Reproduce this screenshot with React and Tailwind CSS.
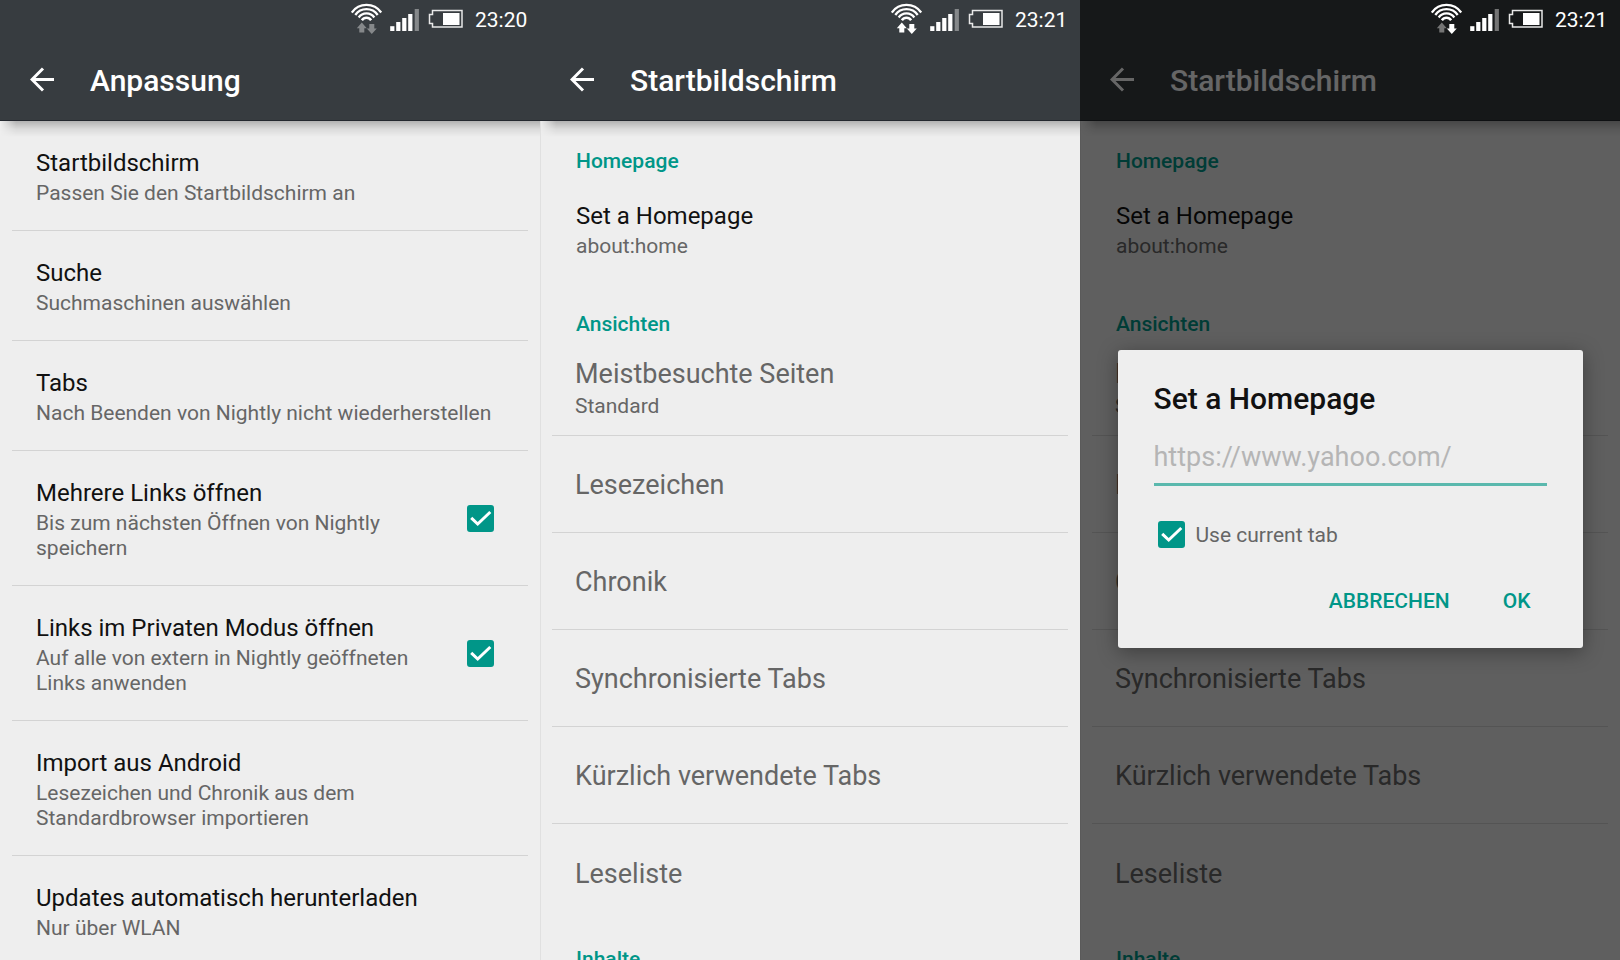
import React from 'react';

function WifiIcon({ up, down }) {
  return (
    <svg width="32" height="32" viewBox="0 0 32 32" aria-hidden="true">
      <g fill="none" stroke="#fff" strokeWidth="2.300">
        <path d="M0.800 10.500a18 18 0 0 1 29.400 0" />
        <path d="M4.300 13a13.600 13.600 0 0 1 22.400 0" />
        <path d="M7.700 15.500a9.400 9.400 0 0 1 15.600 0" />
        <path d="M10.900 18.200a5.500 5.500 0 0 1 9.200 0" strokeWidth="2.500" />
      </g>
      <path d="M10.800 20.500l5 5.800h-2.500v4.200h-5v-4.200h-2.500z" fill={up} />
      <path d="M20.800 32l-5-5.500h2.500v-4.500h5v4.500h2.500z" fill={down} />
    </svg>
  );
}

function SignalIcon({ dim }) {
  return (
    <svg width="30" height="23" viewBox="0 0 30 23" aria-hidden="true">
      <g fill="#fff">
        <rect x="0.200" y="17.200" width="4.200" height="4.800" />
        <rect x="6.200" y="13" width="4.200" height="9" />
        <rect x="12.200" y="9" width="4.200" height="13" />
        <rect x="18.200" y="5" width="4.200" height="17" />
      </g>
      <rect x="24.700" y="0" width="4.200" height="22" fill={dim} />
    </svg>
  );
}

function BatteryIcon() {
  return (
    <svg width="36" height="20" viewBox="0 0 36 20" aria-hidden="true">
      <path d="M4.500 1.500H34V18H4.500V14.500H1.500V5.500H4.500z" fill="none" stroke="#e8e8e8" strokeWidth="1.500" />
      <rect x="15" y="4" width="16.500" height="12" fill="#fff" />
    </svg>
  );
}

function StatusBar({ time, up, down, dim }) {
  return (
    <div className="relative z-20 flex h-10 items-start justify-end pr-3 text-white">
      <div className="pt-[2px]"><WifiIcon up={up} down={down} /></div>
      <div className="ml-[7px] pt-[9px]"><SignalIcon dim={dim} /></div>
      <div className="ml-2 pt-[9px]"><BatteryIcon /></div>
      <span className="ml-[11px] w-[53px] pt-[6px] text-[21px] leading-7">{time}</span>
    </div>
  );
}

function Header({ title, status }) {
  return (
    <header className="h-[121px] shrink-0 border-b border-[#24282f] bg-[#373c40]">
      <StatusBar {...status} />
      <div className="flex h-20 items-center pl-[30px] text-white">
        <button type="button" aria-label="Zurück" className="flex">
          <svg width="26" height="26" viewBox="0 0 26 26" fill="none" stroke="#fff" strokeWidth="3" aria-hidden="true">
            <path d="M24 12.500H3M13 1.500L2 12.500l11 11" />
          </svg>
        </button>
        <h1 className="ml-[34px] pt-0.5 text-[30px] leading-9 font-medium">{title}</h1>
      </div>
    </header>
  );
}

function HeaderShadow() {
  return <div className="absolute inset-x-0 top-0 h-4 bg-linear-to-b from-black/25 via-black/8 to-transparent mask-l-from-97%" />;
}

function Checkbox(props) {
  return (
    <span className="relative flex size-[27px] shrink-0">
      <input type="checkbox" defaultChecked className="peer size-[27px] appearance-none rounded-[3px] border-2 border-[#5c5c5c] checked:border-[#009688] checked:bg-[#009688]" {...props} />
      <svg className="pointer-events-none absolute inset-0 hidden peer-checked:block" width="27" height="27" viewBox="0 0 27 27" fill="none" stroke="#fff" strokeWidth="3" aria-hidden="true">
        <path d="M4.200 12.800l6.500 6.200L23.300 7" />
      </svg>
    </span>
  );
}

const settings = [
  { title: 'Startbildschirm', sub: 'Passen Sie den Startbildschirm an' },
  { title: 'Suche', sub: 'Suchmaschinen auswählen' },
  { title: 'Tabs', sub: 'Nach Beenden von Nightly nicht wiederherstellen' },
  { title: 'Mehrere Links öffnen', sub: 'Bis zum nächsten Öffnen von Nightly speichern', check: 'multi' },
  { title: 'Links im Privaten Modus öffnen', sub: 'Auf alle von extern in Nightly geöffneten Links anwenden', check: 'private' },
  { title: 'Import aus Android', sub: 'Lesezeichen und Chronik aus dem Standardbrowser importieren', narrow: true },
  { title: 'Updates automatisch herunterladen', sub: 'Nur über WLAN' },
];

function SettingText({ title, sub }) {
  return (
    <>
      <span className="block text-[24px] leading-7 text-[#111]">{title}</span>
      <span className="mt-1 block text-[21px] leading-[25px] text-[#666]">{sub}</span>
    </>
  );
}

function CustomizeScreen() {
  return (
    <section className="relative flex min-w-0 flex-col overflow-hidden bg-[#eee]">
      <Header title="Anpassung" status={{ time: '23:20', up: '#85888a', down: '#85888a', dim: '#85888a' }} />
      <div className="relative">
        <HeaderShadow />
        <ul className="px-3">
          {settings.map((s) => (
            <li key={s.title} className="flex items-center justify-between border-b border-[#d3d3d3] pr-[34px] pl-6">
              {s.check ? (
                <>
                  <label htmlFor={s.check} className="w-[380px] pt-7 pb-6"><SettingText {...s} /></label>
                  <Checkbox id={s.check} />
                </>
              ) : (
                <a href="#" className={s.narrow ? 'block w-[380px] pt-7 pb-6' : 'block pt-7 pb-6 whitespace-nowrap'}><SettingText {...s} /></a>
              )}
            </li>
          ))}
        </ul>
      </div>
    </section>
  );
}

function Category({ children }) {
  return <h2 className="pl-6 text-[21px] leading-6 font-medium text-[#009688]">{children}</h2>;
}

const panels = ['Lesezeichen', 'Chronik', 'Synchronisierte Tabs', 'Kürzlich verwendete Tabs', 'Leseliste'];

function HomeScreen({ status, dialog }) {
  return (
    <section className="relative flex min-w-0 flex-col overflow-hidden bg-[#eee]">
      <Header title="Startbildschirm" status={status} />
      <div className="relative grow shadow-[inset_1px_0_0_#e0e0e0]">
        <HeaderShadow />
        <div className="px-3 pt-7">
          <Category>Homepage</Category>
          <a href="#" className="block pt-[29px] pb-[53px] pl-6"><SettingText title="Set a Homepage" sub="about:home" /></a>
          <Category>Ansichten</Category>
          <ul>
            <li className="border-b border-[#d3d3d3] pt-[22px] pb-[17px] pl-[23px] text-[#666]">
              <a href="#" className="block">
                <span className="block text-[27px] leading-8">Meistbesuchte Seiten</span>
                <span className="mt-1 block text-[21px] leading-6">Standard</span>
              </a>
            </li>
            {panels.map((p) => (
              <li key={p} className="flex h-[97px] items-center border-b border-[#d3d3d3] pt-0.5 pl-[23px] text-[27px] leading-8 text-[#666] last:border-b-0">
                <a href="#">{p}</a>
              </li>
            ))}
          </ul>
          <div className="pt-[26px]"><Category>Inhalte</Category></div>
        </div>
      </div>
      {dialog}
    </section>
  );
}

function HomepageDialog() {
  return (
    <div className="absolute inset-0 z-10 flex items-center justify-center bg-black/60 pt-[38px]">
      <div role="dialog" aria-labelledby="dialog-title" className="w-[465px] rounded-[3px] bg-[#eee] px-9 pt-[31px] pb-[35px] shadow-[0_4px_20px_rgba(0,0,0,0.35)]">
        <h2 id="dialog-title" className="text-[30px] leading-9 font-medium text-[#111]">Set a Homepage</h2>
        <input type="url" aria-label="Homepage" placeholder="https://www.yahoo.com/" className="mt-[13px] block h-14 w-full border-b-3 border-[#5ab8ad] bg-transparent text-[27px] outline-none placeholder:text-[#b5b5b5]" />
        <div className="mt-[35px] flex items-center pl-1">
          <Checkbox id="current-tab" />
          <label htmlFor="current-tab" className="ml-[11px] text-[21px] leading-6 text-[#666]">Use current tab</label>
        </div>
        <div className="mt-[41px] flex justify-end gap-[53px] pr-4 text-[21px] leading-6 font-medium text-[#009688]">
          <button type="button">ABBRECHEN</button>
          <button type="button">OK</button>
        </div>
      </div>
    </div>
  );
}

export default function App() {
  return (
    <main className="grid h-screen grid-cols-3 overflow-hidden bg-[#eee] font-[Roboto,sans-serif]">
      <CustomizeScreen />
      <HomeScreen status={{ time: '23:21', up: '#fff', down: '#fff', dim: '#85888a' }} />
      <HomeScreen status={{ time: '23:21', up: '#747474', down: '#fff', dim: '#747474' }} dialog={<HomepageDialog />} />
    </main>
  );
}
